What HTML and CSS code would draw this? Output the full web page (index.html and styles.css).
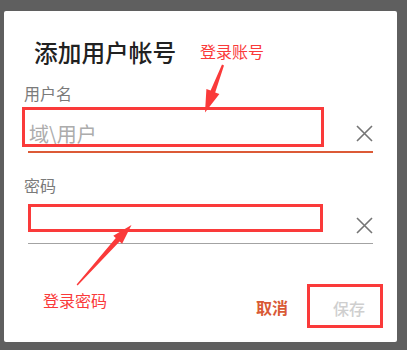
FILE: index.html
```html
<!DOCTYPE html>
<html lang="zh-CN">
<head>
<meta charset="utf-8">
<title>添加用户帐号</title>
<link rel="stylesheet" href="styles.css">
</head>
<body>
<div class="dialog">
  <h1 class="title">添加用户帐号</h1>

  <div class="field">
    <div class="label">用户名</div>
    <div class="input-row active">
      <span class="placeholder">域\用户</span>
      <svg class="clear" viewBox="0 0 17 17" width="17" height="17"><path d="M1 1 L16 16 M16 1 L1 16" stroke="#757575" stroke-width="1.6" fill="none"/></svg>
    </div>
  </div>

  <div class="field">
    <div class="label">密码</div>
    <div class="input-row pw">
      <span class="placeholder"></span>
      <svg class="clear" viewBox="0 0 17 17" width="17" height="17"><path d="M1 1 L16 16 M16 1 L1 16" stroke="#757575" stroke-width="1.6" fill="none"/></svg>
    </div>
  </div>

  <div class="actions">
    <button class="btn cancel">取消</button>
    <button class="btn save">保存</button>
  </div>

  <div class="mark mark-user"></div>
  <div class="mark mark-pass"></div>
  <div class="mark mark-save"></div>
  <div class="note note-user">登录账号</div>
  <div class="note note-pass">登录密码</div>
  <svg class="arrows" viewBox="4 11 393 331" width="393" height="331">
    <polygon fill="#fa3a3a" points="222,64.6 224,65.4 215.2,92.4 219.4,94 205,112.5 206.4,89 210.6,90.6"/>
    <polygon fill="#fa3a3a" points="76.6,284.6 115.8,238.1 113.3,235.8 131.5,225 122.1,243.8 119.6,241.5 77.6,285.4"/>
  </svg>
</div>
</body>
</html>
```

FILE: styles.css
```css
html, body {
  margin: 0;
  padding: 0;
}
body {
  background: #5f5f5f;
  width: 407px;
  height: 350px;
  overflow: hidden;
  font-family: "Noto Sans CJK SC", "Noto Sans", sans-serif;
}
.dialog {
  position: relative;
  margin: 11px 0 0 4px;
  width: 393px;
  height: 331px;
  box-sizing: border-box;
  background: #ffffff;
  border-radius: 2px;
  padding: 0 24px;
  display: flex;
  flex-direction: column;
}
.title {
  margin: 26px 0 0 6px;
  font-size: 23.7px;
  line-height: 30px;
  font-weight: 500;
  color: #212121;
}
.field {
  display: flex;
  flex-direction: column;
}
.label {
  margin-left: -4px;
  font-size: 16px;
  line-height: 20px;
  color: #7a7a7a;
}
.title + .field .label {
  margin-top: 15.5px;
}
.field + .field .label {
  margin-top: 21.5px;
}
.input-row {
  margin-top: 8.5px;
  height: 40px;
  display: flex;
  align-items: flex-end;
  justify-content: space-between;
  border-bottom: 1px solid #a3a3a3;
}
.input-row.active {
  border-bottom: 2px solid #dc5a36;
}
.placeholder {
  padding: 0 0 5px 1px;
  font-size: 20px;
  line-height: 24px;
  color: #acacac;
}
.clear {
  display: block;
  margin-bottom: 9px;
}
.actions {
  margin-top: 52px;
  display: flex;
  justify-content: flex-end;
  gap: 29px;
}
.btn {
  border: none;
  background: none;
  padding: 0 8px;
  font-family: "Noto Sans CJK SC", "Noto Sans", sans-serif;
  font-size: 16px;
  line-height: 20px;
  font-weight: 700;
}
.cancel {
  color: #d95a36;
}
.save {
  color: #cfcfcf;
  font-weight: 500;
  padding-top: 2px;
}
.mark {
  position: absolute;
  box-sizing: border-box;
  border: 3px solid #fa3a3a;
}
.mark-user {
  left: 18px;
  top: 96px;
  width: 302px;
  height: 40px;
}
.mark-pass {
  left: 24px;
  top: 193px;
  width: 295px;
  height: 28px;
}
.mark-save {
  left: 303px;
  top: 273px;
  width: 76px;
  height: 44px;
}
.note {
  position: absolute;
  font-size: 16px;
  line-height: 16px;
  color: #fa3a3a;
}
.note-user {
  left: 196px;
  top: 32px;
}
.note-pass {
  left: 39px;
  top: 281px;
}
.arrows {
  position: absolute;
  left: 0;
  top: 0;
  pointer-events: none;
}
```
